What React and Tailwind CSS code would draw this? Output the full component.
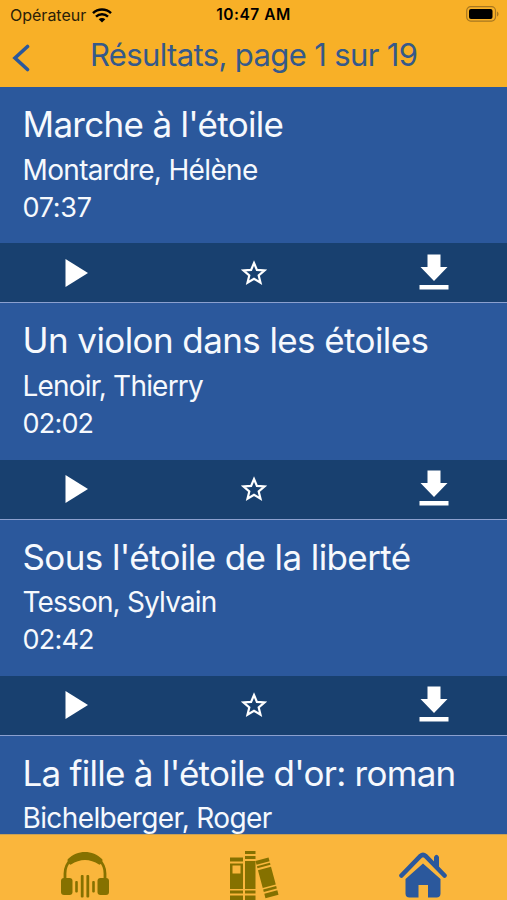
import clsx from "clsx";

const books = [
  {
    title: "Marche à l'étoile",
    author: "Montardre, Hélène",
    duration: "07:37",
    titleTracking: "tracking-[-0.7px]",
    authorTracking: "tracking-[-0.66px]",
    durationTracking: "tracking-[-0.3px]",
  },
  {
    title: "Un violon dans les étoiles",
    author: "Lenoir, Thierry",
    duration: "02:02",
    titleTracking: "tracking-[-0.59px]",
    authorTracking: "tracking-[-0.8px]",
    durationTracking: "tracking-[-0.8px]",
  },
  {
    title: "Sous l'étoile de la liberté",
    author: "Tesson, Sylvain",
    duration: "02:42",
    titleTracking: "tracking-[-0.6px]",
    authorTracking: "tracking-[-0.83px]",
    durationTracking: "tracking-[-0.8px]",
  },
  {
    title: "La fille à l'étoile d'or: roman",
    author: "Bichelberger, Roger",
    titleTracking: "tracking-[-0.73px]",
    authorTracking: "tracking-[-0.62px]",
  },
];

function App() {
  return (
    <div className="flex h-[900px] w-[507px] flex-col overflow-hidden bg-[#2b589c] font-['Inter',sans-serif]">
      <Header />
      <main className="min-h-0 flex-1 overflow-hidden">
        {books.map((book) => (
          <BookItem key={book.title} book={book} />
        ))}
      </main>
      <TabBar />
    </div>
  );
}

function Header() {
  return (
    <header className="h-[87px] shrink-0 bg-[#f8b027]">
      <div className="grid h-[30px] grid-cols-3 items-center pr-2 pl-[10px] text-black">
        <div className="flex items-center gap-[6px]">
          <span className="text-[16px] leading-5 text-[#2b2008]">
            Opérateur
          </span>
          <WifiIcon />
        </div>
        <span className="pr-[2px] text-center text-[15.5px] leading-5 font-semibold tracking-[0.5px] whitespace-nowrap">
          10:47 AM
        </span>
        <div className="flex justify-end">
          <BatteryIcon />
        </div>
      </div>
      <div className="flex h-[50px] items-center">
        <button type="button" aria-label="Retour" className="ml-3 pt-[5px]">
          <BackIcon />
        </button>
        <h1 className="ml-[60px] text-[31px] leading-[50px] tracking-[-0.63px] whitespace-nowrap text-[#35598a]">
          Résultats, page 1 sur 19
        </h1>
      </div>
    </header>
  );
}

function BookItem({ book }) {
  return (
    <article className="flex h-[216.33px] flex-col">
      <div className="flex-1 pt-[13px] pl-[22.5px] whitespace-nowrap text-[#f6f9fd]">
        <h2
          className={clsx("text-[35px] leading-[48px]", book.titleTracking)}
        >
          {book.title}
        </h2>
        <p
          className={clsx(
            "pt-[0.5px] text-[28px] leading-[42px]",
            book.authorTracking
          )}
        >
          {book.author}
        </p>
        {book.duration && (
          <p
            className={clsx("text-[27px] leading-[34px]", book.durationTracking)}
          >
            {book.duration}
          </p>
        )}
      </div>
      <div className="grid h-[60px] grid-cols-3 items-center border-b border-[#8ba0cf] bg-[#18406f]">
        <button type="button" aria-label="Lire" className="ml-[65px]">
          <PlayIcon />
        </button>
        <button
          type="button"
          aria-label="Ajouter aux favoris"
          className="flex justify-center"
        >
          <StarIcon />
        </button>
        <button
          type="button"
          aria-label="Télécharger"
          className="ml-[81px] pb-[2px]"
        >
          <DownloadIcon />
        </button>
      </div>
    </article>
  );
}

function TabBar() {
  return (
    <nav className="grid h-[66px] shrink-0 grid-cols-3 border-t border-[#c9a154] bg-[#fab63c] pt-[16px]">
      <div className="flex justify-center">
        <HeadphonesIcon />
      </div>
      <div className="flex justify-center">
        <BooksIcon />
      </div>
      <div className="flex justify-center">
        <HomeIcon />
      </div>
    </nav>
  );
}

function WifiIcon() {
  return (
    <svg width="20" height="15" viewBox="0 0 20 15" fill="none">
      <path
        d="M1 5.2a13 13 0 0 1 18 0"
        stroke="#000"
        strokeWidth="2.5"
      />
      <path
        d="M4 8.7a8.6 8.6 0 0 1 12 0"
        stroke="#000"
        strokeWidth="2.4"
      />
      <path d="M10 14.6 6.7 11.3a4.7 4.7 0 0 1 6.6 0z" fill="#000" />
    </svg>
  );
}

function BatteryIcon() {
  return (
    <svg width="33" height="16" viewBox="0 0 33 16" className="-mt-[2px]">
      <rect
        x="0.7"
        y="0.7"
        width="28.8"
        height="14.4"
        rx="4"
        fill="none"
        stroke="#a77720"
        strokeWidth="1.2"
      />
      <rect x="3" y="3" width="23.5" height="10" rx="2" fill="#000" />
      <path d="M31 5.5c2 .8 2 4.2 0 5z" fill="#a77720" />
    </svg>
  );
}

function BackIcon() {
  return (
    <svg width="18" height="30" viewBox="0 0 18 30" fill="none">
      <path
        d="M15.5 3.5 3 15l12.5 11.5"
        stroke="#2b589c"
        strokeWidth="3.6"
        strokeLinecap="round"
      />
    </svg>
  );
}

function PlayIcon() {
  return (
    <svg width="24" height="28" viewBox="0 0 24 28" className="block">
      <path d="M0.5 0 23 14 0.5 28z" fill="#fff" />
    </svg>
  );
}

function StarIcon() {
  return (
    <svg width="26" height="26" viewBox="0 0 26 26" className="block">
      <path
        d="M13 3 15.9 9.9 23.4 10.5 17.7 15.4 19.5 22.7 13 18.8 6.5 22.7 8.3 15.4 2.6 10.5 10.1 9.9z"
        fill="none"
        stroke="#fff"
        strokeWidth="2.2"
      />
    </svg>
  );
}

function DownloadIcon() {
  return (
    <svg width="30" height="36" viewBox="0 0 30 36" className="block">
      <path
        d="M8.5 0.5h13V13h7L15 27 1.5 13h7zM0.5 31h29v4.5h-29z"
        fill="#fff"
      />
    </svg>
  );
}

function HeadphonesIcon() {
  return (
    <svg width="50" height="49" viewBox="0 0 50 49" fill="#857100">
      <path
        d="M5 30V22.5C5 11 14 4 25 4s20 7 20 18.5V30"
        fill="none"
        stroke="#857100"
        strokeWidth="2.8"
      />
      <path d="M8 8C17-1.500 33-1.500 42 8c1.500 1.500-1 6.500-3 5.500C30 7.500 20 7.500 11 13.500 9 14.500 6.500 9.500 8 8z" />
      <rect x="1" y="27" width="11.5" height="17" rx="3" />
      <rect x="37.5" y="27" width="11.5" height="17" rx="3" />
      <rect x="15.2" y="30" width="2.6" height="11.5" rx="1" />
      <rect x="20.8" y="24" width="2.8" height="22.5" rx="1" />
      <rect x="26.4" y="24" width="2.8" height="22.5" rx="1" />
      <rect x="32.2" y="30" width="2.6" height="11.5" rx="1" />
    </svg>
  );
}

function BooksIcon() {
  return (
    <svg width="50" height="49" viewBox="0 0 50 49" fill="#857100">
      <path
        d="M1 6.5h13v4H1zM1 12.5h13V38H1zM3.500 14.500v8h8v-8zM1 39.500h13v3H1zM1 44.500h13V49H1z"
        fillRule="evenodd"
      />
      <path d="M16 0h10.5v3H16zM16 5h10.5v3H16zM16 10h10.5v28H16zM16 39.500h10.500v3H16zM16 44.500h10.500V49H16z" />
      <g transform="rotate(-15 26.5 10)">
        <path d="M26.5 10H40v4H26.5zM26.5 15.5H40v2H26.5zM26.5 19.5H40V38H26.5zM26.500 39.500H40v2.500H26.500zM26.500 44H40v4.500H26.500z" />
      </g>
    </svg>
  );
}

function HomeIcon() {
  return (
    <svg width="50" height="49" viewBox="0 0 50 49" fill="#2b589c">
      <path
        d="M3.5 24.5 22.5 5q2.5-2.3 5 0L46.5 24.5"
        fill="none"
        stroke="#2b589c"
        strokeWidth="4.6"
        strokeLinecap="round"
      />
      <path d="M36 6q2.5-4.5 5 0v12l-5-5z" />
      <path d="M25 12.5 42.5 28v14.5q0 4-4 4H30V34h-9.5v12.5H11.5q-4 0-4-4V28z" />
    </svg>
  );
}

export default App;
